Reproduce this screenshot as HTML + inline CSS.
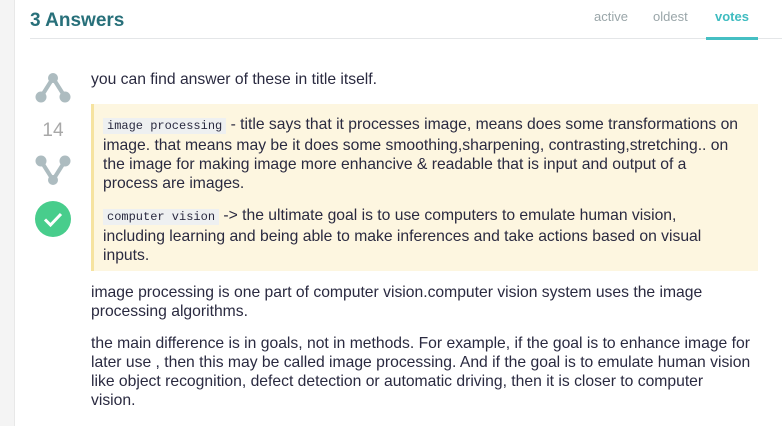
<!DOCTYPE html>
<html><head><style>
body{margin:0;width:782px;height:426px;overflow:hidden;background:#fff;font-family:"Liberation Sans",sans-serif;position:relative}
.strip{position:absolute;left:0;top:0;width:14px;height:426px;background:#f4f4f4;border-right:1px solid #e8e8e8}
h2{position:absolute;left:30px;top:10px;margin:0;font-size:19px;font-weight:bold;color:#28707a}
.hl{position:absolute;left:30px;right:0;top:38px;height:1px;background:#e4e6e8}
.tab{position:absolute;top:9px;font-size:13px;color:#9aa6a9}
.ul{position:absolute;left:706px;width:52px;top:37px;height:3px;background:#45bfc3}
.t{position:absolute;white-space:nowrap;font-size:15.7px;color:#2a2a40;line-height:19px}
.bq{position:absolute;left:91px;top:104px;width:667px;height:167px;background:#fdf6e0;border-left:3px solid #f6e3a0;box-sizing:border-box}
code{font-family:"Liberation Mono",monospace;font-size:12px;background:#eef0f1;padding:1px 4px}
.num{position:absolute;left:30px;width:46px;text-align:center;top:120px;font-size:19px;color:#a8a8a8}
</style></head><body>
<div class="strip"></div>
<h2>3 Answers</h2>
<div class="hl"></div>
<div class="tab" style="left:594px">active</div>
<div class="tab" style="left:653px">oldest</div>
<div class="tab" style="left:715px;color:#3fbcc0;font-weight:bold">votes</div>
<div class="ul"></div>
<svg style="position:absolute;left:34px;top:73px" width="38" height="30"><g stroke="#adbcc0" stroke-width="4"><line x1="19" y1="5" x2="7" y2="24"/><line x1="19" y1="5" x2="31" y2="24"/></g><g fill="#adbcc0"><circle cx="19" cy="5" r="5"/><circle cx="7" cy="24" r="5.5"/><circle cx="31" cy="24" r="5.5"/></g></svg>
<div class="num">14</div>
<svg style="position:absolute;left:34px;top:155px" width="38" height="30"><g stroke="#adbcc0" stroke-width="4"><line x1="19" y1="25" x2="7" y2="6"/><line x1="19" y1="25" x2="31" y2="6"/></g><g fill="#adbcc0"><circle cx="19" cy="25" r="5"/><circle cx="7" cy="6" r="5.5"/><circle cx="31" cy="6" r="5.5"/></g></svg>
<svg style="position:absolute;left:35px;top:201px" width="36" height="36"><circle cx="18" cy="18" r="18" fill="#48cd8c"/><path d="M10 18.5l5.5 5.5 10.5-11" stroke="#fff" stroke-width="3" fill="none"/></svg>
<div class="t" style="left:91px;top:70px">you can find answer of these in title itself.</div>
<div class="bq"></div>
<div class="t" style="left:103px;top:115px"><code>image processing</code> - title says that it processes image, means does some transformations on<br>image. that means may be it does some smoothing,sharpening, contrasting,stretching.. on<br>the image for making image more enhancive &amp; readable that is input and output of a<br>process are images.</div>
<div class="t" style="left:103px;top:206px"><code>computer vision</code> -&gt; the ultimate goal is to use computers to emulate human vision,<br>including learning and being able to make inferences and take actions based on visual<br>inputs.</div>
<div class="t" style="left:91px;top:283px">image processing is one part of computer vision.computer vision system uses the image<br>processing algorithms.</div>
<div class="t" style="left:91px;top:334px">the main difference is in goals, not in methods. For example, if the goal is to enhance image for<br>later use , then this may be called image processing. And if the goal is to emulate human vision<br>like object recognition, defect detection or automatic driving, then it is closer to computer<br>vision.</div>
</body></html>
